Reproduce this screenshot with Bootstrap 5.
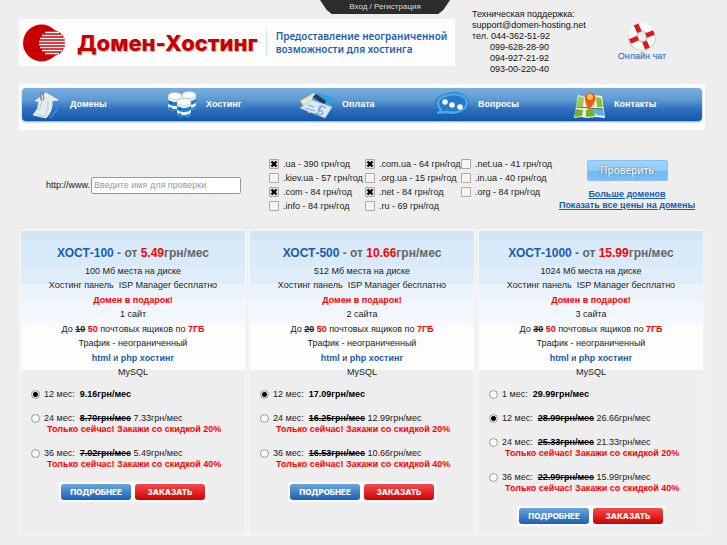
<!DOCTYPE html>
<html lang="ru">
<head>
<meta charset="utf-8">
<meta name="viewport" content="width=device-width, initial-scale=1">
<title>Домен-Хостинг</title>
<link href="https://cdn.jsdelivr.net/npm/bootstrap@5.3.0/dist/css/bootstrap.min.css" rel="stylesheet">
<style>
body{background:#eee;color:#222;font:9px/11px "Liberation Sans",Arial,sans-serif}
a{color:#165cb0}
.page{padding:0 22px 0 19px}
.masthead{padding-bottom:9px}
.login-tab{width:130px;height:14px;margin-right:5px;background:#2b2c2c;color:#ddd;font-size:8px;line-height:13px;clip-path:polygon(0 0,100% 0,95% 70%,91% 100%,9% 100%,5% 70%)}
.brand{width:436px;height:47px;margin-top:5px;background:#fdfdfd}
.brand-name{color:#c80000;font:800 22px/28px Inter,"Open Sans",sans-serif;text-shadow:1px 1px 1px #bbb}
.tagline{color:#1d60ae;font:600 10px/13px "Noto Sans",sans-serif;border-left:1px solid #bfe0f8;padding:0 0 0 9px}
.support{margin:9px 0 0 17px;color:#111}
.phones{padding-left:18px}
.chat{margin:22px 0 0 32px}
.menu-frame{background:#fdfdfd;padding:4px 3px 9px}
.menu-bar{background:linear-gradient(#79afde,#5e9ad1 35%,#2e6fbd 65%,#1257ac);border-radius:4px;box-shadow:0 1px 2px #8a9bb0;height:33px}
.menu-bar a{color:#fff;padding-left:4px;gap:8px;flex:1 1 0}
.check-area{padding:27px 8px 16px 27px}
.prefix{margin-right:1px}
.domain-field{width:150px;height:17px;font-size:9px;line-height:11px;padding:2px;border:1px solid #989898;border-radius:2px;color:#222}
.domain-field::placeholder{color:#999}
.zones{display:grid;grid-template-columns:repeat(3,96px);grid-auto-rows:14px;margin-left:28px;align-items:center}
.zones label,.term label{white-space:nowrap}
.tick{appearance:none;width:10px;height:10px;margin:0 4px 0 0;border:1px solid #aaa;border-radius:1px;background:#f8f5f5;flex:none}
.tick:checked{background:#ddd url("data:image/svg+xml,%3Csvg xmlns='http://www.w3.org/2000/svg' viewBox='0 0 8 8'%3E%3Cpath d='M1.5 1.5 6.5 6.5M6.5 1.5 1.5 6.5' stroke='%23000' stroke-width='2.2'/%3E%3C/svg%3E") center/8px}
.check-btn{width:81px;height:21px;border:1px solid #8cbfec;border-radius:2px;background:linear-gradient(#a0d5fb,#8fcbfa 50%,#70b8f5 51%,#78bff8);color:#eef5fa;font:500 10px/17px "Noto Sans",sans-serif;text-shadow:0 0 2px #456;padding:0}
.check-links{width:140px}
.plans{display:grid;grid-template-columns:repeat(3,1fr);gap:1px}
.plan{border:2px solid #f2f5f6;padding:13px 10px 8px;background:linear-gradient(#d3e6f4 0 9px,#d9eafa 9px 35px,#deedf9 35px 53px,#ebf4fc 53px 70px,#f2f7fe 70px 82px,#f7fafe 96px,#fdfdfd 96px 139px,#eee 139px)}
.plan h2{font-size:12px;line-height:18px;font-weight:700;color:#666;margin:0 0 2px}
.features{margin:0 0 8px;line-height:14px}
.features li:nth-child(even){line-height:15px}
.blue{color:#165cb0}
.red{color:#f00}
.term{line-height:12px;margin-bottom:12px}
.term-row{height:12px}
.term b,.term s{color:#000}
.dot{appearance:none;width:9px;height:9px;border:1px solid #999;border-radius:50%;margin:0 4px 0 0;background:#fafafa;flex:none}
.dot:checked{background:radial-gradient(#000 0 2px,#eee 3px)}
.promo{line-height:11px;padding-left:16px;white-space:nowrap}
.actions{background:#fdfdfd;width:148px;height:20px;padding:2px;gap:4px}
.actions button{flex:1;height:16px;border:0;border-radius:3px;color:#fff;font:800 8px/14px Inter,"Open Sans",sans-serif;padding:0}
.more{background:linear-gradient(#6aa5da,#1a60b4)}
.order{background:linear-gradient(#f54a4a,#d00000)}
</style>
<script src="https://cdn.jsdelivr.net/npm/bootstrap@5.3.0/dist/js/bootstrap.bundle.min.js"></script>
</head>
<body>
<div class="page">
<header class="masthead d-flex align-items-start">
  <div class="d-flex flex-column">
    <a href="#" class="login-tab align-self-end text-center text-decoration-none">Вход / Регистрация</a>
    <div class="brand d-flex align-items-center">
      <svg class="ms-1 flex-shrink-0" width="42" height="40" viewBox="0 0 42 40"><circle cx="18.500" cy="20" r="18.500" fill="#c80000"/><circle cx="29" cy="20" r="13" fill="#c80000"/><path d="M22 9.500h14M19 12.500h20M17 15.500h24M16 18.500h26M16 21.500h26M17 24.500h24M19 27.500h20M22 30.500h14" stroke="#fff" stroke-width="1.500"/></svg>
      <span class="brand-name ms-2 ps-1 text-nowrap">Домен-Хостинг</span>
      <span class="tagline ms-2 text-nowrap">Предоставление неограниченной<br>возможности для хостинга</span>
    </div>
  </div>
  <address class="support mb-0 text-nowrap">Техническая поддержка:<br>support@domen-hosting.net<br>тел. 044-362-51-92<div class="phones">099-628-28-90<br>094-927-21-92<br>093-00-220-40</div></address>
  <a href="#" class="chat text-center text-decoration-none text-nowrap">
    <svg class="d-block mx-auto" width="30" height="29" viewBox="0 0 30 29"><ellipse cx="15" cy="16" rx="14" ry="12.500" fill="#bbb"/><circle cx="15" cy="14.500" r="9.500" fill="none" stroke="#fcfcfc" stroke-width="8"/><circle cx="15" cy="14.500" r="5" fill="#eee" stroke="#bbb" stroke-width=".8"/><path d="m9 2.500 3.500 7.500M27 10.500l-8 3M20.500 26.500l-3-7M3 19.500l8-3.500" stroke="#dc1818" stroke-width="5"/></svg>Онлайн чат</a>
</header>
<nav class="menu-frame">
  <div class="menu-bar d-flex align-items-center fw-bold">
    <a href="#" class="d-flex align-items-center text-decoration-none"><svg width="36" height="30" viewBox="0 0 36 30"><path d="m24 28 7-8-1-9-5-2" fill="none" stroke="#3685d7" stroke-width="2"/><path d="M7 25q6-6 6-14H9L20 3l12 7-6 1q1 10-6 17Z" fill="#e7ebed" stroke="#fff" stroke-width=".7"/><path d="m11 24 9 3M16 12l-3 9M22 12q1 7-3 13" stroke="#bcc8cf" fill="none"/><path d="m16 9-2-5q1-3 3-1l1 6q-1 3-3 1l-1-4" fill="none" stroke="#788187"/></svg>Домены</a>
    <a href="#" class="d-flex align-items-center text-decoration-none"><svg width="36" height="30" viewBox="0 0 36 30"><defs><g id="disk"><path d="M0 4v12c0 4 14 4 14 0V4" fill="#efefef"/><path d="M0 7c1 4 13 4 14 0v4c-1 4-13 4-14 0m0 3c1 4 13 4 14 0v2c-1 4-13 4-14 0" fill="#1785d2"/><path d="M3 9v3m0 3v3" stroke="#0a3a77"/><ellipse cx="7" cy="4" rx="7" ry="3.500" fill="#fbfbfb" stroke="#bbb" stroke-width=".6"/></g></defs><use href="#disk" x="6" y="2"/><use href="#disk" x="20" y="1"/><use href="#disk" x="15" y="8"/></svg>Хостинг</a>
    <a href="#" class="d-flex align-items-center text-decoration-none"><svg width="36" height="30" viewBox="0 0 36 30"><path d="m2 11 14-8 10 13-15 7Z" fill="#e7e8c8" stroke="#c5bd86" stroke-width=".6"/><path d="m15 6 5-3 16 5-6 11-17-5Z" fill="#2e9ee2"/><path d="m18 4 10 7-2 4-11-8Z" fill="#263d55"/><path d="m2 18 12-8 20 7-7 11Z" fill="#d8e9f7" stroke="#a5c8e2" stroke-width=".7"/><path d="m7 18 10 3m-7-6 6 2m12 1q-6-4-7 0-2 4 3 3 3 3-3 4l-4-2m7-8-5 10" stroke="#8aaac5" fill="none" stroke-width="1.300"/></svg>Оплата</a>
    <a href="#" class="d-flex align-items-center text-decoration-none"><svg width="36" height="30" viewBox="0 0 36 30"><path d="M7 20Q-1 11 8 7q14-7 23 1 6 8-5 13-6 3-13 1l-10 1q4-1 4-3Z" fill="#286eb9" stroke="#123e7c" stroke-width="4" opacity=".4"/><path d="M7 20Q0 12 8 7q14-6 23 1 6 8-5 13-6 3-13 1l-10 1q4-1 4-3Z" fill="#2879c8" stroke="#41aaf2" stroke-width="2.500"/><g fill="#f8f8f8"><circle cx="11" cy="12" r="2.800"/><circle cx="18" cy="15" r="2.800"/><circle cx="26" cy="17" r="2.800"/></g></svg>Вопросы</a>
    <a href="#" class="d-flex align-items-center text-decoration-none"><svg width="36" height="30" viewBox="0 0 36 30"><path d="m8 5 7 2 9-2 8 1 3 22-9-1-9 1-6-1-7 1Z" fill="#f1f3e8"/><path d="m9 6 5 2-1 9-7-1Z" fill="#9ace44"/><path d="m17 8 7-2 1 10-9 2Z" fill="#b0d864"/><path d="m26 7 5 1 2 9h-6Z" fill="#8ac13b"/><path d="m5 19 8 1-1 6-7 1Zm11 1 8-2 1 8-9 1Z" fill="#73b035"/><path d="m26 18 7 1 1 7-7-1-4-4Z" fill="#58aef0"/><path d="m6 17 27 2" stroke="#4b7740"/><path d="M19 20q-5-9-4-13 2-5 7-4 5 2 3 8Z" fill="#ef571b"/><circle cx="20" cy="7" r="3" fill="#ffc747"/></svg>Контакты</a>
  </div>
</nav>
<form class="check-area d-flex align-items-center justify-content-between">
  <div class="d-flex align-items-center">
    <label for="domain" class="prefix">http://www.</label><input id="domain" class="domain-field" type="text" placeholder="Введите имя для проверки">
    <div class="zones">
      <label class="d-flex align-items-center"><input class="tick" type="checkbox" checked>.ua - 390 грн/год</label>
      <label class="d-flex align-items-center"><input class="tick" type="checkbox" checked>.com.ua - 64 грн/год</label>
      <label class="d-flex align-items-center"><input class="tick" type="checkbox">.net.ua - 41 грн/год</label>
      <label class="d-flex align-items-center"><input class="tick" type="checkbox">.kiev.ua - 57 грн/год</label>
      <label class="d-flex align-items-center"><input class="tick" type="checkbox">.org.ua - 15 грн/год</label>
      <label class="d-flex align-items-center"><input class="tick" type="checkbox">.in.ua - 40 грн/год</label>
      <label class="d-flex align-items-center"><input class="tick" type="checkbox" checked>.com - 84 грн/год</label>
      <label class="d-flex align-items-center"><input class="tick" type="checkbox" checked>.net - 84 грн/год</label>
      <label class="d-flex align-items-center"><input class="tick" type="checkbox">.org - 84 грн/год</label>
      <label class="d-flex align-items-center"><input class="tick" type="checkbox">.info - 84 грн/год</label>
      <label class="d-flex align-items-center"><input class="tick" type="checkbox">.ru - 69 грн/год</label>
    </div>
  </div>
  <div class="check-links text-center text-nowrap fw-bold">
    <button type="button" class="check-btn d-block mx-auto mb-2">Проверить</button>
    <a href="#">Больше доменов</a><br><a href="#">Показать все цены на домены</a>
  </div>
</form>
<main class="plans">
  <section class="plan d-flex flex-column">
    <h2 class="text-center"><span class="blue">ХОСТ-100</span> - от <span class="red">5.49</span>грн/мес</h2>
    <ul class="features list-unstyled text-center">
      <li>100 Мб места на диске</li><li>Хостинг панель &nbsp;ISP Manager бесплатно</li><li class="red fw-bold">Домен в подарок!</li><li>1 сайт</li>
      <li>До <s class="fw-bold">10</s> <b class="red">50</b> почтовых ящиков по <b class="red">7ГБ</b></li><li>Трафик - неограниченный</li><li><b class="blue">html</b> и <b class="blue">php хостинг</b></li><li>MySQL</li>
    </ul>
    <div class="term"><label class="term-row d-flex align-items-center"><input class="dot" type="radio" name="p100" checked><span>12 мес: &nbsp;<b>9.16грн/мес</b></span></label></div>
    <div class="term"><label class="term-row d-flex align-items-center"><input class="dot" type="radio" name="p100"><span>24 мес: &nbsp;<s class="fw-bold">8.70грн/мес</s> 7.33грн/мес</span></label><div class="promo red fw-bold">Только сейчас! Закажи со скидкой 20%</div></div>
    <div class="term"><label class="term-row d-flex align-items-center"><input class="dot" type="radio" name="p100"><span>36 мес: &nbsp;<s class="fw-bold">7.02грн/мес</s> 5.49грн/мес</span></label><div class="promo red fw-bold">Только сейчас! Закажи со скидкой 40%</div></div>
    <div class="actions d-flex mx-auto"><button type="button" class="more">ПОДРОБНЕЕ</button><button type="button" class="order">ЗАКАЗАТЬ</button></div>
  </section>
  <section class="plan d-flex flex-column">
    <h2 class="text-center"><span class="blue">ХОСТ-500</span> - от <span class="red">10.66</span>грн/мес</h2>
    <ul class="features list-unstyled text-center">
      <li>512 Мб места на диске</li><li>Хостинг панель &nbsp;ISP Manager бесплатно</li><li class="red fw-bold">Домен в подарок!</li><li>2 сайта</li>
      <li>До <s class="fw-bold">20</s> <b class="red">50</b> почтовых ящиков по <b class="red">7ГБ</b></li><li>Трафик - неограниченный</li><li><b class="blue">html</b> и <b class="blue">php хостинг</b></li><li>MySQL</li>
    </ul>
    <div class="term"><label class="term-row d-flex align-items-center"><input class="dot" type="radio" name="p500" checked><span>12 мес: &nbsp;<b>17.09грн/мес</b></span></label></div>
    <div class="term"><label class="term-row d-flex align-items-center"><input class="dot" type="radio" name="p500"><span>24 мес: &nbsp;<s class="fw-bold">16.25грн/мес</s> 12.99грн/мес</span></label><div class="promo red fw-bold">Только сейчас! Закажи со скидкой 20%</div></div>
    <div class="term"><label class="term-row d-flex align-items-center"><input class="dot" type="radio" name="p500"><span>36 мес: &nbsp;<s class="fw-bold">16.53грн/мес</s> 10.66грн/мес</span></label><div class="promo red fw-bold">Только сейчас! Закажи со скидкой 40%</div></div>
    <div class="actions d-flex mx-auto"><button type="button" class="more">ПОДРОБНЕЕ</button><button type="button" class="order">ЗАКАЗАТЬ</button></div>
  </section>
  <section class="plan d-flex flex-column">
    <h2 class="text-center"><span class="blue">ХОСТ-1000</span> - от <span class="red">15.99</span>грн/мес</h2>
    <ul class="features list-unstyled text-center">
      <li>1024 Мб места на диске</li><li>Хостинг панель &nbsp;ISP Manager бесплатно</li><li class="red fw-bold">Домен в подарок!</li><li>3 сайта</li>
      <li>До <s class="fw-bold">30</s> <b class="red">50</b> почтовых ящиков по <b class="red">7ГБ</b></li><li>Трафик - неограниченный</li><li><b class="blue">html</b> и <b class="blue">php хостинг</b></li><li>MySQL</li>
    </ul>
    <div class="term"><label class="term-row d-flex align-items-center"><input class="dot" type="radio" name="p1000"><span>1 мес: &nbsp;<b>29.99грн/мес</b></span></label></div>
    <div class="term"><label class="term-row d-flex align-items-center"><input class="dot" type="radio" name="p1000" checked><span>12 мес: &nbsp;<s class="fw-bold">28.99грн/мес</s> 26.66грн/мес</span></label></div>
    <div class="term"><label class="term-row d-flex align-items-center"><input class="dot" type="radio" name="p1000"><span>24 мес: &nbsp;<s class="fw-bold">25.33грн/мес</s> 21.33грн/мес</span></label><div class="promo red fw-bold">Только сейчас! Закажи со скидкой 20%</div></div>
    <div class="term"><label class="term-row d-flex align-items-center"><input class="dot" type="radio" name="p1000"><span>36 мес: &nbsp;<s class="fw-bold">22.99грн/мес</s> 15.99грн/мес</span></label><div class="promo red fw-bold">Только сейчас! Закажи со скидкой 40%</div></div>
    <div class="actions d-flex mx-auto"><button type="button" class="more">ПОДРОБНЕЕ</button><button type="button" class="order">ЗАКАЗАТЬ</button></div>
  </section>
</main>
</div>
</body>
</html>
